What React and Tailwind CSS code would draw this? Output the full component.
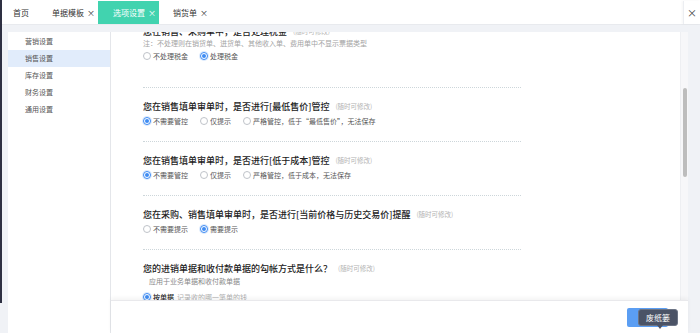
import React from "react";

const tabs = [
  { label: "首页", width: "w-[38px]", pad: "pl-[11px]" },
  { label: "单据模板", width: "w-[58px]", pad: "pl-[12px]", closable: true },
  { label: "选项设置", width: "w-[61px]", pad: "pl-[15px]", closable: true, active: true },
  { label: "销货单", width: "w-[56px]", pad: "pl-[14px]", closable: true },
];

const menu = ["营销设置", "销售设置", "库存设置", "财务设置", "通用设置"];

const sections = [
  {
    title: "您在销售填单审单时，是否进行[最低售价]管控",
    options: ["不需要管控", "仅提示", "严格管控，低于“最低售价”，无法保存"],
    checked: 0,
  },
  {
    title: "您在销售填单审单时，是否进行[低于成本]管控",
    options: ["不需要管控", "仅提示", "严格管控，低于成本，无法保存"],
    checked: 0,
  },
  {
    title: "您在采购、销售填单审单时，是否进行[当前价格与历史交易价]提醒",
    options: ["不需要提示", "需要提示"],
    checked: 1,
  },
];

function Radio({ checked }) {
  return (
    <span
      className={`mr-[2px] flex h-[8px] w-[8px] shrink-0 items-center justify-center rounded-full border bg-white ${
        checked ? "border-[#3f8cf3] shadow-[0_0_0_1px_rgba(63,140,243,0.18)]" : "border-[#bfc3c9]"
      }`}
    >
      {checked && <span className="h-[4px] w-[4px] rounded-full bg-[#3f8cf3]" />}
    </span>
  );
}

function RadioRow({ options, checked, className = "" }) {
  return (
    <div className={`flex h-[12px] items-center gap-[12px] ${className}`}>
      {options.map((opt, i) => (
        <label key={opt} className="flex items-center text-[7px] leading-none text-[#555]">
          <Radio checked={i === checked} />
          {opt}
        </label>
      ))}
    </div>
  );
}

function Title({ children }) {
  return (
    <div className="flex h-[14px] items-center whitespace-nowrap">
      <span className="text-[9px] font-medium leading-none text-[#222]">{children}</span>
      <span className="ml-[6px] text-[6.5px] leading-none text-[#b3b3b3]">(随时可修改)</span>
    </div>
  );
}

export default function App() {
  return (
    <div className="flex h-[333px] w-[700px] overflow-hidden bg-[#f0f2f6] font-['Noto_Sans_CJK_SC','Noto_Sans',sans-serif]">
      <div className="h-[303px] w-[2px] shrink-0 bg-[#2e3042]" />

      <div className="flex min-w-0 flex-1 flex-col">
        {/* tab bar */}
        <div className="flex h-[25px] shrink-0 border-b border-[#e8eaee] bg-white pt-[1px]">
          {tabs.map((tab) => (
            <div
              key={tab.label}
              className={`flex h-full items-center text-[8px] ${tab.width} ${tab.pad} ${
                tab.active ? "bg-[#41d3af] text-white" : "text-[#333]"
              }`}
            >
              {tab.label}
              {tab.closable && <span className="ml-[3px] text-[8px] leading-none">×</span>}
            </div>
          ))}
          <div className="flex-1" />
          <div className="flex w-[17px] items-center justify-center border-l border-[#eceef2] text-[10px] text-[#444] shadow-[-1px_0_2px_rgba(0,0,0,0.04)]">
            ×
          </div>
        </div>

        <div className="flex min-h-0 flex-1 pl-[6px] pt-[7px]">
          {/* sidebar */}
          <div className="w-[102px] shrink-0 bg-white pt-[1px]">
            {menu.map((item) => (
              <div
                key={item}
                className={`flex h-[17px] items-center pl-[17px] text-[7px] text-[#555] ${
                  item === "销售设置" ? "bg-[#e1ecfb]" : ""
                }`}
              >
                {item}
              </div>
            ))}
          </div>

          {/* main panel */}
          <div className="flex w-[578px] shrink-0 flex-col border-l border-[#e4e6ea] bg-white">
            <div className="flex min-h-0 flex-1">
              <div className="min-w-0 flex-1 overflow-hidden pl-[32px]">
                <div className="-mt-[8px] w-[378px]">
                  <div className="border-b border-dotted border-[#cdd6da] pb-[25px]">
                    <Title>您在销售、采购单中，是否处理税金</Title>
                    <p className="h-[10px] text-[7px] leading-[10px] text-[#a3a3a3]">
                      注：不处理则在销货单、进货单、其他收入单、费用单中不显示票据类型
                    </p>
                    <RadioRow options={["不处理税金", "处理税金"]} checked={1} className="mt-[2px]" />
                  </div>

                  {sections.map((s) => (
                    <div key={s.title} className="border-b border-dotted border-[#cdd6da] pb-[14px] pt-[11px]">
                      <Title>{s.title}</Title>
                      <RadioRow options={s.options} checked={s.checked} className="mt-[2px]" />
                    </div>
                  ))}

                  <div className="pt-[11px]">
                    <Title>您的进销单据和收付款单据的勾帐方式是什么？</Title>
                    <p className="mt-[1px] h-[10px] pl-[6px] text-[7px] leading-[10px] text-[#888]">
                      应用于业务单据和收付款单据
                    </p>
                    <div className="mt-[5px] flex h-[12px] items-center text-[7px] leading-none">
                      <Radio checked />
                      <span className="font-medium text-[#222]">按单据</span>
                      <span className="ml-[3px] text-[#b0b0b0]">记录收的哪一笔单的钱</span>
                    </div>
                  </div>
                </div>
              </div>

              {/* scrollbar */}
              <div className="w-[8px] shrink-0 border-l border-[#eeeff2] bg-[#f7f7f9] pl-[2px]">
                <div className="mt-[56px] h-[89px] w-[4px] rounded-full bg-[#bdbdbd]" />
              </div>
            </div>

            {/* footer */}
            <div className="relative flex h-[33px] shrink-0 items-center justify-end border-t border-[#e9e9ec] bg-white pr-[20px] shadow-[0_-2px_4px_rgba(0,0,0,0.05)]">
              <button className="flex h-[19px] w-[41px] items-center justify-center rounded-[2px] bg-[#5b9ef3] text-[8px] text-white">
                保存
              </button>
              <div className="absolute right-[10px] top-[8px] flex h-[17px] w-[40px] items-center justify-center rounded-[3px] border border-[#6c7485] bg-[#4b5366] text-[8px] text-white">
                废纸篓
                <span className="absolute -bottom-[4px] left-[18px] h-0 w-0 border-x-[3px] border-t-[4px] border-x-transparent border-t-[#4b5366]" />
              </div>
            </div>
          </div>
        </div>
      </div>
    </div>
  );
}
